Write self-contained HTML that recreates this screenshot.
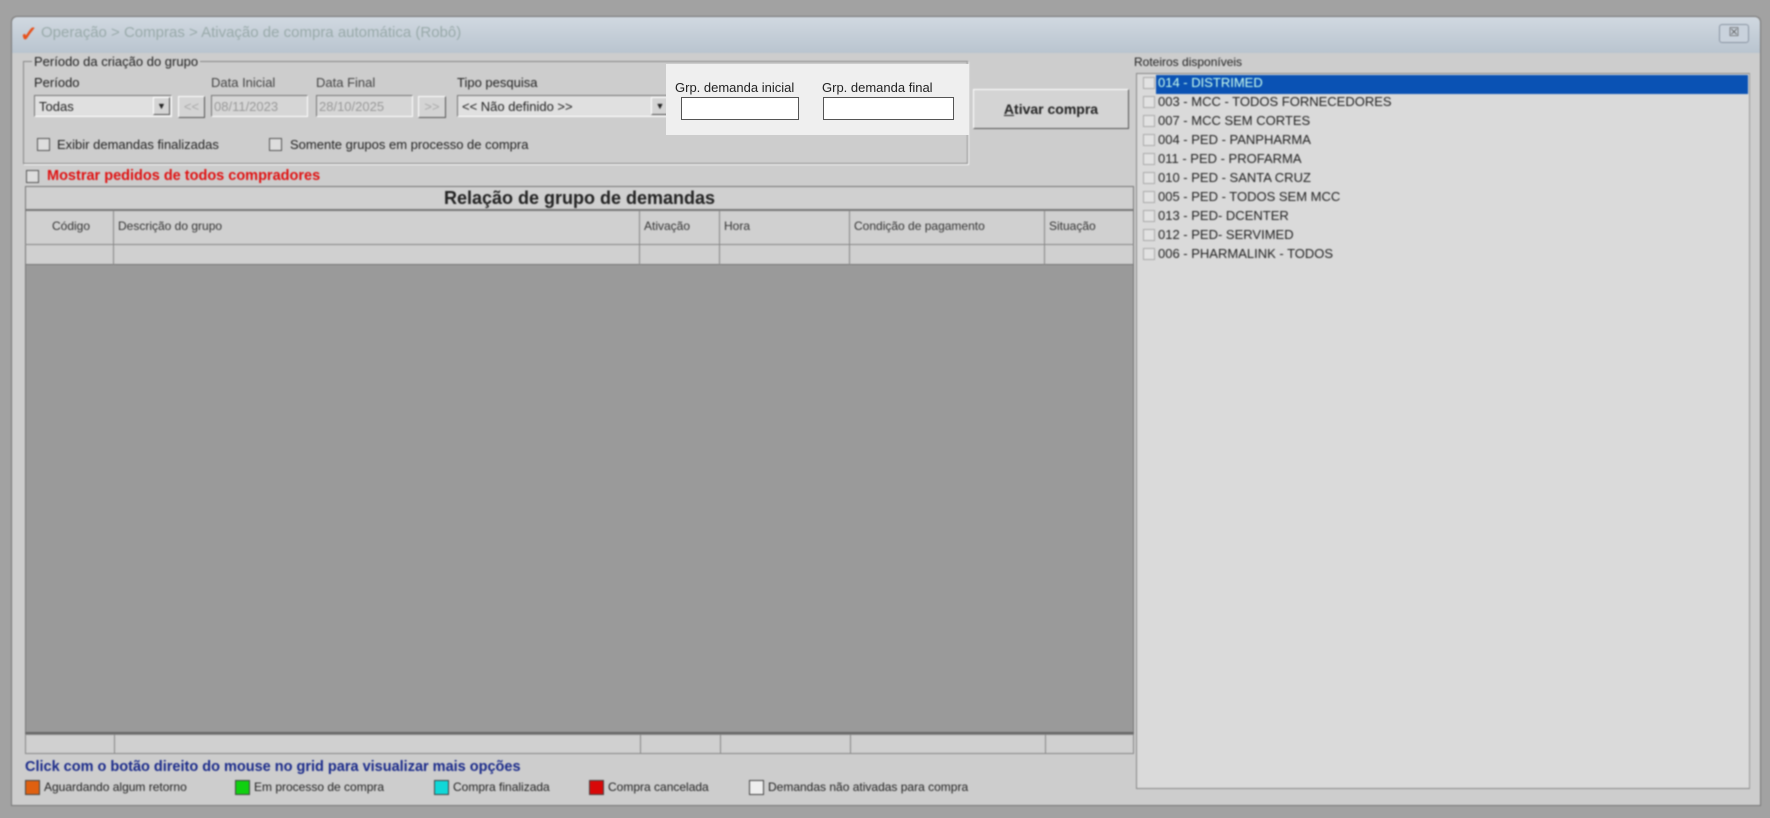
<!DOCTYPE html><html><head><meta charset="utf-8"><style>
*{box-sizing:border-box;margin:0;padding:0}
body{width:1770px;height:818px;background:#a2a2a2;font-family:"Liberation Sans",sans-serif;font-size:13px;color:#222;position:relative;overflow:hidden}
.a{position:absolute}
#wrap{position:absolute;left:0;top:0;width:1770px;height:818px;filter:blur(0.9px)}
.win{left:11px;top:16px;width:1750px;height:790px;background:#cdcdcd;border:1px solid #777;border-radius:6px 6px 0 0}
.title{left:12px;top:17px;width:1748px;height:36px;background:linear-gradient(#d0d8e0,#b9c4cf);border-radius:6px 6px 0 0}
.sunk{border:1px solid #777;border-right-color:#fff;border-bottom-color:#fff}
.btn{background:#d4d4d4;border:1px solid #fff;border-right-color:#555;border-bottom-color:#555}
.cb{width:13px;height:13px;border:1px solid #555;background:#ddd}
.hd{border-right:1px solid #888;padding-left:4px;font-size:12px;color:#333}
.li{position:absolute;left:6px;height:19px;font-size:13px;color:#222;white-space:nowrap}
.li span.b{display:inline-block;width:12px;height:12px;border:1px solid #aaa;background:#e2e2e2;margin-right:3px;vertical-align:-2px}
.sw{position:absolute;width:15px;height:15px;border:1px solid #444}
.lg{position:absolute;top:780px;font-size:12px}
</style></head><body>
<div id="wrap">
<div class="a win"></div>
<div class="a title"></div>
<div class="a" style="left:20px;top:22px;font-size:21px;color:#e8501a;font-weight:bold">✓</div>
<div class="a" style="left:41px;top:24px;font-size:15px;color:#9aa">Operação &gt; Compras &gt; Ativação de compra automática (Robô)</div>
<div class="a" style="left:1719px;top:24px;width:30px;height:19px;border:1px solid #8a95a3;border-radius:3px;background:#c9d2dc;font-size:12px;text-align:center;color:#555">☒</div>

<div class="a" style="left:23px;top:61px;width:945px;height:103px;border:1px solid #888;box-shadow:1px 1px 0 #fff"></div>
<div class="a" style="left:32px;top:54px;background:#cdcdcd;padding:0 2px;font-size:13px">Período da criação do grupo</div>
<div class="a" style="left:34px;top:75px">Período</div>
<div class="a" style="left:211px;top:75px;color:#444">Data Inicial</div>
<div class="a" style="left:316px;top:75px;color:#444">Data Final</div>
<div class="a" style="left:457px;top:75px">Tipo pesquisa</div>
<div class="a sunk" style="left:34px;top:95px;width:138px;height:22px;background:#e0e0e0;padding:3px 4px">Todas</div>
<div class="a btn" style="left:153px;top:97px;width:17px;height:18px;font-size:9px;text-align:center;line-height:16px">▼</div>
<div class="a btn" style="left:178px;top:96px;width:27px;height:22px;color:#aaa;text-align:center;line-height:20px">&lt;&lt;</div>
<div class="a sunk" style="left:211px;top:95px;width:97px;height:22px;background:#d6d6d6;color:#999;padding:3px 2px">08/11/2023</div>
<div class="a sunk" style="left:316px;top:95px;width:97px;height:22px;background:#d6d6d6;color:#999;padding:3px 2px">28/10/2025</div>
<div class="a btn" style="left:418px;top:96px;width:28px;height:22px;color:#aaa;text-align:center;line-height:20px">&gt;&gt;</div>
<div class="a sunk" style="left:457px;top:95px;width:215px;height:22px;background:#e0e0e0;padding:3px 4px">&lt;&lt; Não definido &gt;&gt;</div>
<div class="a btn" style="left:651px;top:97px;width:18px;height:18px;font-size:9px;text-align:center;line-height:16px">▼</div>
<div class="a cb" style="left:37px;top:138px"></div><div class="a" style="left:57px;top:137px">Exibir demandas finalizadas</div>
<div class="a cb" style="left:269px;top:138px"></div><div class="a" style="left:290px;top:137px">Somente grupos em processo de compra</div>

<div class="a btn" style="left:973px;top:89px;width:156px;height:40px;font-weight:bold;text-align:center;line-height:38px;font-size:14px"><u>A</u>tivar compra</div>

<div class="a cb" style="left:26px;top:170px"></div>
<div class="a" style="left:47px;top:168px;color:#e01010;font-weight:bold;font-size:14.5px">Mostrar pedidos de todos compradores</div>

<div class="a" style="left:25px;top:186px;width:1109px;height:24px;border:1px solid #777;background:#d0d0d0;text-align:center;font-weight:bold;font-size:18px;line-height:22px">Relação de grupo de demandas</div>
<div class="a" style="left:25px;top:210px;width:1109px;height:55px;border:1px solid #777;background:#d0d0d0"></div>
<div class="a" style="left:25px;top:244px;width:1109px;height:1px;background:#888"></div>
<div class="a" style="left:25px;top:210px;height:55px;display:flex">
<div class="hd" style="width:89px;text-align:center;padding-top:9px">Código</div>
<div class="hd" style="width:526px;padding-top:9px">Descrição do grupo</div>
<div class="hd" style="width:80px;padding-top:9px">Ativação</div>
<div class="hd" style="width:130px;padding-top:9px">Hora</div>
<div class="hd" style="width:195px;padding-top:9px">Condição de pagamento</div>
<div class="hd" style="width:89px;padding-top:9px;border:0">Situação</div>
</div>
<div class="a" style="left:25px;top:265px;width:1109px;height:469px;background:#9a9a9a;border-left:1px solid #777;border-right:1px solid #777;border-bottom:2px solid #666"></div>
<div class="a" style="left:25px;top:734px;width:1109px;height:20px;border:1px solid #888;background:#d0d0d0;display:flex">
<div class="hd" style="width:89px"></div><div class="hd" style="width:526px"></div><div class="hd" style="width:80px"></div><div class="hd" style="width:130px"></div><div class="hd" style="width:195px"></div></div>
<div class="a" style="left:25px;top:759px;color:#1a2a8a;font-weight:bold;font-size:14.5px">Click com o botão direito do mouse no grid para visualizar mais opções</div>
<div class="sw" style="left:25px;top:780px;background:#e06010"></div><div class="lg" style="left:44px">Aguardando algum retorno</div>
<div class="sw" style="left:235px;top:780px;background:#10d010"></div><div class="lg" style="left:254px">Em processo de compra</div>
<div class="sw" style="left:434px;top:780px;background:#10d8d8"></div><div class="lg" style="left:453px">Compra finalizada</div>
<div class="sw" style="left:589px;top:780px;background:#d80808"></div><div class="lg" style="left:608px">Compra cancelada</div>
<div class="sw" style="left:749px;top:780px;background:#eee"></div><div class="lg" style="left:768px">Demandas não ativadas para compra</div>

<div class="a" style="left:1134px;top:55px;font-size:12px">Roteiros disponíveis</div>
<div class="a" style="left:1136px;top:73px;width:614px;height:716px;background:#dadada;border:1px solid #888;border-right-color:#999">
<div class="a" style="left:19px;top:1px;width:592px;height:19px;background:#0a52b4"></div>
<div class="li" style="top:1px"><span class="b"></span><span style="color:#cfe">014 - DISTRIMED</span></div>
<div class="li" style="top:20px"><span class="b"></span>003 - MCC - TODOS FORNECEDORES</div>
<div class="li" style="top:39px"><span class="b"></span>007 - MCC SEM CORTES</div>
<div class="li" style="top:58px"><span class="b"></span>004 - PED - PANPHARMA</div>
<div class="li" style="top:77px"><span class="b"></span>011 - PED - PROFARMA</div>
<div class="li" style="top:96px"><span class="b"></span>010 - PED - SANTA CRUZ</div>
<div class="li" style="top:115px"><span class="b"></span>005 - PED - TODOS SEM MCC</div>
<div class="li" style="top:134px"><span class="b"></span>013 - PED- DCENTER</div>
<div class="li" style="top:153px"><span class="b"></span>012 - PED- SERVIMED</div>
<div class="li" style="top:172px"><span class="b"></span>006 - PHARMALINK - TODOS</div>
</div>
</div>

<div class="a" style="left:666px;top:64px;width:303px;height:71px;background:#efefef"></div>
<div class="a" style="left:675px;top:80px;font-size:13px;color:#222">Grp. demanda inicial</div>
<div class="a" style="left:822px;top:80px;font-size:13px;color:#222">Grp. demanda final</div>
<div class="a" style="left:681px;top:97px;width:118px;height:23px;background:#fff;border:1px solid #555"></div>
<div class="a" style="left:823px;top:97px;width:131px;height:23px;background:#fff;border:1px solid #555"></div>
</body></html>
